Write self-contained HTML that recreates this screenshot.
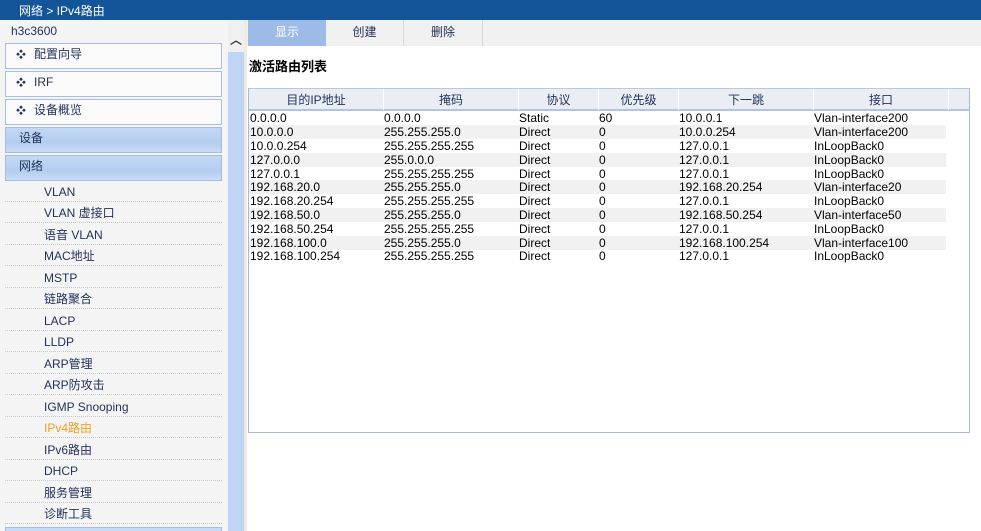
<!DOCTYPE html>
<html><head><meta charset="utf-8"><style>
*{margin:0;padding:0;box-sizing:border-box}
html,body{width:981px;height:531px;overflow:hidden}
body{background:#fff;font-family:"Liberation Sans","Noto Sans CJK SC",sans-serif;position:relative;font-size:12px}
.top{position:absolute;left:0;top:0;width:981px;height:20px;background:#14559a;color:#fff;font-size:12px;line-height:22px;padding-left:19px}
.side{position:absolute;left:0;top:20px;width:228px;height:511px;background:#f4f4f4;overflow:hidden}
.host{position:absolute;left:11px;top:4px;color:#23325a;font-size:12px}
.box{position:absolute;left:5px;width:217px;height:26px;border:1px solid #a9bedf;background:#fafafa;color:#23325a;font-size:12px;line-height:20px;padding-left:10px}
.box.b{background:linear-gradient(#c6d9f5,#b3cdf0 60%,#c9dcf6);padding-left:13px;border-color:#a4bde2}
.box i{font-style:normal;font-size:10px;margin-right:8px}
.item{position:absolute;left:5px;width:217px;height:21px;border-bottom:1px dotted #c8c8c8;color:#23325a;font-size:12px;padding-left:39px;line-height:22px}
.sb{position:absolute;left:228px;top:20px;width:16px;height:511px;background:#c0d4f6}
.sbt{position:absolute;left:228px;top:20px;width:16px;height:32px;background:#f0f0f0;color:#333;text-align:center;font-size:12px;line-height:40px;font-weight:bold}
.cream{position:absolute;left:244px;top:20px;width:3px;height:511px;background:#efebe0}
.tabs{position:absolute;left:247px;top:20px;width:734px;height:26px;background:#f1f1f1}
.tab{position:absolute;top:0;height:26px;line-height:25px;text-align:center;color:#23325a;font-size:12px;border-right:1px solid #d8d8d8}
.title{position:absolute;left:249px;top:56px;font-weight:bold;font-size:13px;color:#000}
.tbl{position:absolute;left:248px;top:88px;width:722px;height:345px;border:1px solid #a8b8d8;border-top-color:#b8c8e0}
.hd{position:absolute;left:0;top:0;width:720px;height:22px;background:#eaeef4;border-bottom:2px solid #b0c4e4}
.hc{position:absolute;top:0;height:21px;line-height:22px;text-align:center;color:#23325a;font-size:12px;border-right:1px solid #fff}
.row{position:absolute;left:0;width:697px;height:14px;font-size:12px;line-height:14px;color:#000}
.row.s{background:#f1f1f1}
.row span{position:absolute;top:0}
</style></head><body>
<div class="top">网络 &gt; IPv4路由</div>
<div class="side">
<div class="host">h3c3600</div>
<div class="box" style="top:23px"><i>❖</i>配置向导</div>
<div class="box" style="top:51px"><i>❖</i>IRF</div>
<div class="box" style="top:79px"><i>❖</i>设备概览</div>
<div class="box b" style="top:107px">设备</div>
<div class="box b" style="top:135px">网络</div>
<div class="item" style="top:161px">VLAN</div>
<div class="item" style="top:182px">VLAN 虚接口</div>
<div class="item" style="top:204px">语音 VLAN</div>
<div class="item" style="top:225px">MAC地址</div>
<div class="item" style="top:247px">MSTP</div>
<div class="item" style="top:268px">链路聚合</div>
<div class="item" style="top:290px">LACP</div>
<div class="item" style="top:311px">LLDP</div>
<div class="item" style="top:333px">ARP管理</div>
<div class="item" style="top:354px">ARP防攻击</div>
<div class="item" style="top:376px">IGMP Snooping</div>
<div class="item" style="top:397px;color:#f0a020">IPv4路由</div>
<div class="item" style="top:419px">IPv6路由</div>
<div class="item" style="top:440px">DHCP</div>
<div class="item" style="top:462px">服务管理</div>
<div class="item" style="top:483px">诊断工具</div>
<div class="box" style="top:507px;background:#c6d9f5"></div>
</div>
<div class="sb"></div>
<div class="sbt">︿</div>
<div class="cream"></div>
<div class="tabs">
<div class="tab" style="left:1px;width:78px;background:#9dbbe6;color:#fff;border:none">显示</div>
<div class="tab" style="left:79px;width:78px">创建</div>
<div class="tab" style="left:157px;width:79px">删除</div>
</div>
<div class="title">激活路由列表</div>
<div class="tbl">
<div class="hd">
<div class="hc" style="left:0;width:135px">目的IP地址</div>
<div class="hc" style="left:135px;width:135px">掩码</div>
<div class="hc" style="left:270px;width:80px">协议</div>
<div class="hc" style="left:350px;width:80px">优先级</div>
<div class="hc" style="left:430px;width:135px">下一跳</div>
<div class="hc" style="left:565px;width:135px">接口</div>
</div>
<div class="row" style="top:22px"><span style="left:1px">0.0.0.0</span><span style="left:135px">0.0.0.0</span><span style="left:270px">Static</span><span style="left:350px">60</span><span style="left:430px">10.0.0.1</span><span style="left:565px">Vlan-interface200</span></div>
<div class="row s" style="top:36px"><span style="left:1px">10.0.0.0</span><span style="left:135px">255.255.255.0</span><span style="left:270px">Direct</span><span style="left:350px">0</span><span style="left:430px">10.0.0.254</span><span style="left:565px">Vlan-interface200</span></div>
<div class="row" style="top:50px"><span style="left:1px">10.0.0.254</span><span style="left:135px">255.255.255.255</span><span style="left:270px">Direct</span><span style="left:350px">0</span><span style="left:430px">127.0.0.1</span><span style="left:565px">InLoopBack0</span></div>
<div class="row s" style="top:64px"><span style="left:1px">127.0.0.0</span><span style="left:135px">255.0.0.0</span><span style="left:270px">Direct</span><span style="left:350px">0</span><span style="left:430px">127.0.0.1</span><span style="left:565px">InLoopBack0</span></div>
<div class="row" style="top:78px"><span style="left:1px">127.0.0.1</span><span style="left:135px">255.255.255.255</span><span style="left:270px">Direct</span><span style="left:350px">0</span><span style="left:430px">127.0.0.1</span><span style="left:565px">InLoopBack0</span></div>
<div class="row s" style="top:91px"><span style="left:1px">192.168.20.0</span><span style="left:135px">255.255.255.0</span><span style="left:270px">Direct</span><span style="left:350px">0</span><span style="left:430px">192.168.20.254</span><span style="left:565px">Vlan-interface20</span></div>
<div class="row" style="top:105px"><span style="left:1px">192.168.20.254</span><span style="left:135px">255.255.255.255</span><span style="left:270px">Direct</span><span style="left:350px">0</span><span style="left:430px">127.0.0.1</span><span style="left:565px">InLoopBack0</span></div>
<div class="row s" style="top:119px"><span style="left:1px">192.168.50.0</span><span style="left:135px">255.255.255.0</span><span style="left:270px">Direct</span><span style="left:350px">0</span><span style="left:430px">192.168.50.254</span><span style="left:565px">Vlan-interface50</span></div>
<div class="row" style="top:133px"><span style="left:1px">192.168.50.254</span><span style="left:135px">255.255.255.255</span><span style="left:270px">Direct</span><span style="left:350px">0</span><span style="left:430px">127.0.0.1</span><span style="left:565px">InLoopBack0</span></div>
<div class="row s" style="top:147px"><span style="left:1px">192.168.100.0</span><span style="left:135px">255.255.255.0</span><span style="left:270px">Direct</span><span style="left:350px">0</span><span style="left:430px">192.168.100.254</span><span style="left:565px">Vlan-interface100</span></div>
<div class="row" style="top:160px"><span style="left:1px">192.168.100.254</span><span style="left:135px">255.255.255.255</span><span style="left:270px">Direct</span><span style="left:350px">0</span><span style="left:430px">127.0.0.1</span><span style="left:565px">InLoopBack0</span></div>
</div>
</body></html>
